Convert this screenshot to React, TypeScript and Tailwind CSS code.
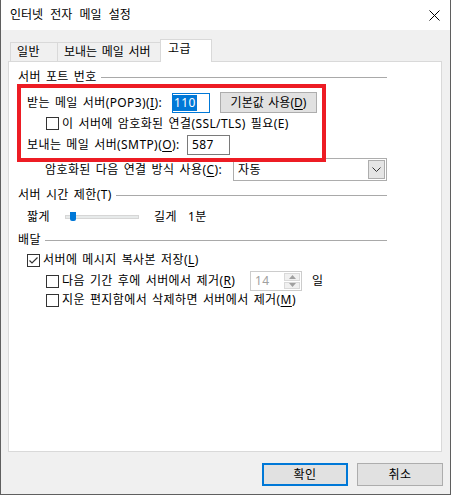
import React from "react";

const FONT = { fontFamily: '"Noto Sans", "Noto Sans CJK KR", sans-serif' };

function Box({ checked = false }: { checked?: boolean }) {
  return (
    <div className="w-[13px] h-[13px] border border-[#333333] bg-white shrink-0 flex items-center justify-center">
      {checked && (
        <svg width="11" height="11" viewBox="0 0 11 11">
          <polyline points="1.5,5.5 4,8 9.5,2.5" fill="none" stroke="#333333" strokeWidth="1.2" />
        </svg>
      )}
    </div>
  );
}

function Header({ label, u }: { label: string; u: string }) {
  return (
    <div className="flex items-center h-[16px] ml-[9px] w-[369px]">
      <span className="whitespace-nowrap">
        {label}
        {u && (
          <>
            (<span>{u}</span>)
          </>
        )}
      </span>
      <div className="flex-1 h-px bg-[#a9a9a9] ml-[4px]" />
    </div>
  );
}

function U({ c }: { c: string }) {
  return (
    <>
      (<span className="underline underline-offset-2">{c}</span>)
    </>
  );
}

export default function App() {
  return (
    <div
      className="relative w-[451px] h-[495px] bg-[#f0f0f0] border-l border-r border-b border-[#5f5f5f] text-[12px] leading-[16px] text-black [word-spacing:1.5px] tracking-[0.4px]"
      style={FONT}
    >
      {/* title bar */}
      <div className="h-[30px] bg-white flex items-center justify-between pl-[9px] pr-[9px]">
        <span className="text-[12px] tracking-[0px] [word-spacing:4px]">인터넷 전자 메일 설정</span>
        <svg width="11" height="11" viewBox="0 0 11 11" className="mr-[1px]">
          <line x1="0.5" y1="0.5" x2="10.5" y2="10.5" stroke="#000" strokeWidth="1" />
          <line x1="10.5" y1="0.5" x2="0.5" y2="10.5" stroke="#000" strokeWidth="1" />
        </svg>
      </div>

      {/* tabs */}
      <div className="ml-[9px] mt-[9px] h-[22px] flex items-end">
        <div className="w-[47px] h-[19px] border-l border-t border-[#d9d9d9] bg-[#f0f0f0] pl-[6px] flex items-center">
          일반
        </div>
        <div className="w-[103px] h-[19px] border-l border-t border-[#d9d9d9] bg-[#f0f0f0] pl-[6px] flex items-center whitespace-nowrap tracking-[0px]">
          보내는 메일 서버
        </div>
        <div className="relative z-10 -mb-px w-[52px] h-[23px] border-l border-t border-r border-[#d9d9d9] bg-white pl-[7px] pb-[4px] flex items-center">
          고급
        </div>
      </div>

      {/* panel */}
      <div className="ml-[7px] w-[434px] h-[391px] border border-[#d9d9d9] bg-white flex flex-col">
        <div className="mt-[7px]">
          <Header label="서버 포트 번호" u="" />
        </div>

        {/* row 1 */}
        <div className="mt-[7px] h-[21px] flex items-center ml-[18px]">
          <span className="w-[145px] whitespace-nowrap">
            받는 메일 서버(POP3)<U c="I" />:
          </span>
          <div className="w-[38px] h-[20px] border border-[#0078d7] bg-white flex items-center">
            <span className="bg-[#0078d7] text-white leading-[16px] px-[1px]">110</span>
          </div>
          <div className="ml-[10px] w-[97px] h-[21px] border border-[#adadad] bg-[#e1e1e1] flex items-center justify-center whitespace-nowrap tracking-[0px]">
            기본값 사용<U c="D" />
          </div>
        </div>

        {/* row 2 */}
        <div className="mt-[4px] h-[13px] flex items-center ml-[37px]">
          <Box />
          <span className="ml-[3px] whitespace-nowrap">
            이 서버에 암호화된 연결(SSL/TLS) 필요(E)
          </span>
        </div>

        {/* row 3 */}
        <div className="mt-[5px] h-[20px] flex items-center ml-[18px]">
          <span className="w-[160px] whitespace-nowrap">
            보내는 메일 서버(SMTP)<U c="O" />:
          </span>
          <div className="w-[43px] h-[20px] border border-[#7a7a7a] bg-white flex items-center pl-[4px]">
            587
          </div>
        </div>

        {/* row 4 */}
        <div className="mt-[3px] h-[23px] flex items-center ml-[36px]">
          <span className="w-[188px] whitespace-nowrap">
            암호화된 다음 연결 방식 사용<U c="C" />:
          </span>
          <div className="w-[154px] h-[23px] border border-[#adadad] bg-white flex items-center justify-between pl-[4px] pr-[1px]">
            <span>자동</span>
            <div className="w-[17px] h-[19px] border border-[#adadad] bg-[#e5e5e5] flex items-center justify-center">
              <svg width="9" height="6" viewBox="0 0 9 6">
                <polyline points="0.5,0.5 4.5,4.5 8.5,0.5" fill="none" stroke="#333" strokeWidth="1" />
              </svg>
            </div>
          </div>
        </div>

        <div className="mt-[6px]">
          <Header label="서버 시간 제한" u="T" />
        </div>

        {/* slider row */}
        <div className="mt-[6px] h-[16px] flex items-center ml-[18px]">
          <span className="w-[38px]">짧게</span>
          <div className="relative w-[74px] h-[4px] border border-[#d6d6d6] bg-[#e7eaea]">
            <div className="absolute left-[4px] top-[-4px] w-[6px] h-[9px] bg-[#0078d7] rounded-b-[2px]" />
          </div>
          <span className="ml-[15px] w-[34px]">길게</span>
          <span>1분</span>
        </div>

        <div className="mt-[7px]">
          <Header label="배달" u="" />
        </div>

        {/* L row */}
        <div className="mt-[5px] h-[14px] flex items-center ml-[18px]">
          <Box checked />
          <span className="ml-[3px] whitespace-nowrap">
            서버에 메시지 복사본 저장<U c="L" />
          </span>
        </div>

        {/* R row */}
        <div className="mt-[4px] h-[20px] flex items-center ml-[37px]">
          <Box />
          <span className="ml-[3px] w-[188px] whitespace-nowrap">
            다음 기간 후에 서버에서 제거<U c="R" />
          </span>
          <div className="w-[52px] h-[20px] border border-[#cccccc] bg-white flex items-center justify-between pl-[4px] pr-[1px]">
            <span className="text-[#a0a0a0]">14</span>
            <div className="w-[16px] h-[16px] flex flex-col gap-[1px]">
              <div className="flex-1 bg-[#f0f0f0] border border-[#d9d9d9] flex items-center justify-center">
                <svg width="7" height="4" viewBox="0 0 7 4">
                  <polygon points="0,4 3.5,0 7,4" fill="#a0a0a0" />
                </svg>
              </div>
              <div className="flex-1 bg-[#f0f0f0] border border-[#d9d9d9] flex items-center justify-center">
                <svg width="7" height="4" viewBox="0 0 7 4">
                  <polygon points="0,0 3.5,4 7,0" fill="#a0a0a0" />
                </svg>
              </div>
            </div>
          </div>
          <span className="ml-[10px]">일</span>
        </div>

        {/* M row */}
        <div className="mt-[2px] h-[14px] flex items-center ml-[37px]">
          <Box />
          <span className="ml-[3px] whitespace-nowrap">
            지운 편지함에서 삭제하면 서버에서 제거<U c="M" />
          </span>
        </div>
      </div>

      {/* buttons */}
      <div className="mt-[11px] flex justify-end gap-[9px] pr-[7px]">
        <div className="w-[86px] h-[23px] border-2 border-[#0078d7] bg-[#e1e1e1] flex items-center justify-center">
          확인
        </div>
        <div className="w-[86px] h-[23px] border border-[#adadad] bg-[#e1e1e1] flex items-center justify-center">
          취소
        </div>
      </div>

      {/* red annotation */}
      <div className="absolute left-[16px] top-[84px] w-[309px] h-[78px] border-4 border-[#ed1c24] pointer-events-none" />
    </div>
  );
}
